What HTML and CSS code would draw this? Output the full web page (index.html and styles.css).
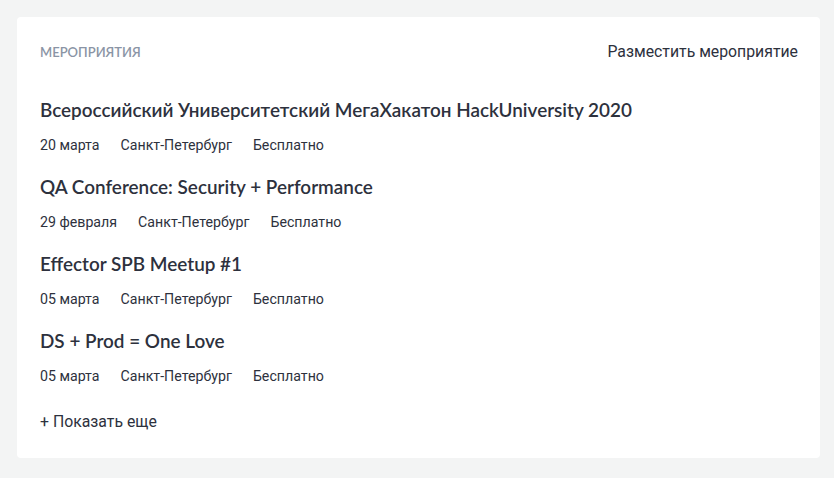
FILE: index.html
```html
<!DOCTYPE html>
<html lang="ru">
<head>
<meta charset="utf-8">
<link rel="stylesheet" href="styles.css">
</head>
<body>
<section class="card">
  <header class="card-head">
    <h2 class="card-title">Мероприятия</h2>
    <a class="card-action" href="#">Разместить мероприятие</a>
  </header>
  <ul class="events">
    <li class="event">
      <a class="event-name" href="#">Всероссийский Университетский МегаХакатон HackUniversity 2020</a>
      <div class="event-meta"><span>20 марта</span><span>Санкт-Петербург</span><span>Бесплатно</span></div>
    </li>
    <li class="event">
      <a class="event-name" href="#">QA Conference: Security + Performance</a>
      <div class="event-meta"><span>29 февраля</span><span>Санкт-Петербург</span><span>Бесплатно</span></div>
    </li>
    <li class="event">
      <a class="event-name" href="#">Effector SPB Meetup #1</a>
      <div class="event-meta"><span>05 марта</span><span>Санкт-Петербург</span><span>Бесплатно</span></div>
    </li>
    <li class="event">
      <a class="event-name" href="#">DS + Prod = One Love</a>
      <div class="event-meta"><span>05 марта</span><span>Санкт-Петербург</span><span>Бесплатно</span></div>
    </li>
  </ul>
  <a class="more" href="#">+ Показать еще</a>
</section>
</body>
</html>
```

FILE: styles.css
```css
* { box-sizing: border-box; }
html, body { margin: 0; padding: 0; }
body {
  background: #f3f4f4;
  padding: 17px 14px 20px 17px;
  font-family: "Roboto", "Liberation Sans", sans-serif;
  color: #2d313d;
}
.card {
  background: #ffffff;
  border-radius: 4px;
  padding: 25px 22px 26px 23px;
  height: 441px;
}
.card-head {
  display: flex;
  justify-content: space-between;
  align-items: center;
  height: 20px;
}
.card-title {
  margin: 0;
  font-family: "Lato", sans-serif;
  font-weight: 600;
  font-size: 13px;
  line-height: 20px;
  text-transform: uppercase;
  color: #8a94a5;
}
.card-action {
  font-size: 15.8px;
  line-height: 20px;
  color: #2d313d;
  text-decoration: none;
}
.events {
  list-style: none;
  margin: 36px 0 0;
  padding: 0;
  display: flex;
  flex-direction: column;
  gap: 20px;
}
.event { display: flex; flex-direction: column; gap: 13px; }
.event-name {
  font-family: "Lato", sans-serif;
  font-weight: 600;
  font-size: 18.9px;
  line-height: 24px;
  color: #2d313d;
  text-decoration: none;
}
.event-meta {
  display: flex;
  gap: 21px;
  font-size: 14.2px;
  line-height: 20px;
}
.more {
  display: block;
  margin-top: 26px;
  font-size: 15.8px;
  line-height: 20px;
  color: #2d313d;
  text-decoration: none;
}
```
